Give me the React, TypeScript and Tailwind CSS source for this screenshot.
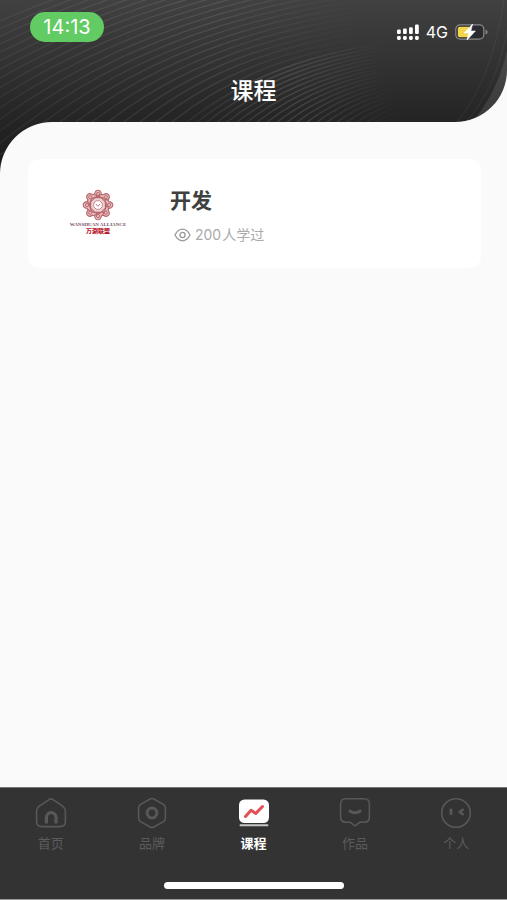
import { useState } from "react";
import type { ReactNode } from "react";

interface Course {
  id: string;
  title: string;
  views: number;
}

interface Tab {
  key: string;
  label: string;
  icon: ReactNode;
}

const courses: Course[] = [{ id: "c-1", title: "开发", views: 200 }];

const outline = {
  width: 34,
  height: 34,
  viewBox: "0 0 34 34",
  fill: "none",
  stroke: "#585858",
  strokeWidth: 1.6,
  strokeLinecap: "round" as const,
  strokeLinejoin: "round" as const,
};

const tabs: Tab[] = [
  {
    key: "home",
    label: "首页",
    icon: (
      <svg {...outline}>
        <path d="M14.6 3.8Q17 2 19.4 3.8L28.6 10.2Q31.4 12.3 31.4 15.5V25.5Q31.4 30.6 26 30.6H8Q2.6 30.6 2.6 25.5V15.5Q2.6 12.3 5.4 10.2Z" />
        <path d="M12.4 27.6V21.4A4.8 4.8 0 0 1 22 21.4V27.6" strokeWidth="3.2" strokeLinecap="butt" />
      </svg>
    ),
  },
  {
    key: "brand",
    label: "品牌",
    icon: (
      <svg {...outline}>
        <path d="M15.2 3Q17 2 18.8 3L28.4 8.4Q30.4 9.6 30.4 11.8V22.2Q30.4 24.4 28.4 25.6L18.8 31Q17 32 15.2 31L5.6 25.6Q3.6 24.4 3.6 22.2V11.8Q3.6 9.6 5.6 8.4Z" />
        <circle cx="17" cy="17" r="4.9" strokeWidth="3" />
      </svg>
    ),
  },
  {
    key: "course",
    label: "课程",
    icon: (
      <svg {...outline}>
        <rect x="2" y="3.5" width="30" height="23.5" rx="5.5" fill="#fff" stroke="none" />
        <path d="M3.5 29.2H30.5" stroke="#c9c9c9" strokeWidth="2" />
        <path d="M8.5 20.5L14 14.2L18.8 17.4L25.5 10.5" stroke="#e25156" strokeWidth="3" />
      </svg>
    ),
  },
  {
    key: "works",
    label: "作品",
    icon: (
      <svg {...outline}>
        <path d="M8 2.8H26Q31.4 2.8 31.4 8V21Q31.4 26.2 26 26.2H22L18.2 29.2Q17 30.2 15.8 29.2L12 26.2H8Q2.6 26.2 2.6 21V8Q2.6 2.8 8 2.8Z" />
        <path d="M11.8 15Q17 18.6 22.2 15" strokeWidth="2.8" />
      </svg>
    ),
  },
  {
    key: "mine",
    label: "个人",
    icon: (
      <svg {...outline}>
        <circle cx="17" cy="17" r="14.3" />
        <path d="M12 14V17.8" strokeWidth="2.8" />
        <path d="M23.8 13.8L20.6 16L23.8 18.2" strokeWidth="2.4" />
      </svg>
    ),
  },
];

function arc(sx: number, ex: number, ey: number) {
  const cx = sx + (ex - sx) * 0.4;
  const cy = ey + (122 - ey) * 0.22;
  // run on below the header so the lines reach the inverted corner
  const tailX = sx - (cx - sx);
  const tailY = 122 + (122 - cy);
  return `M${tailX} ${tailY}L${sx} 122Q${cx} ${cy} ${ex} ${ey}`;
}

// Curved line texture on the dark header
function Waves({ id }: { id: string }) {
  const sweep = Array.from({ length: 23 }, (_, i) => i);
  const fan = Array.from({ length: 20 }, (_, i) => i);
  return (
    <>
      <defs>
        <linearGradient id={id} gradientUnits="userSpaceOnUse" x1="0" y1="0" x2="0" y2="174">
          <stop offset="0" stopColor="#414141" />
          <stop offset="0.65" stopColor="#262626" />
          <stop offset="1" stopColor="#1a1a1a" />
        </linearGradient>
        <linearGradient id={`${id}-line`} gradientUnits="userSpaceOnUse" x1="0" y1="0" x2="360" y2="0">
          <stop offset="0" stopColor="#fff" stopOpacity="0.05" />
          <stop offset="0.6" stopColor="#fff" stopOpacity="0.09" />
          <stop offset="1" stopColor="#fff" stopOpacity="0" />
        </linearGradient>
        {/* slanted so that the lower lines fade further right */}
        <linearGradient id={`${id}-fan`} gradientUnits="userSpaceOnUse" x1="180" y1="100" x2="378" y2="40">
          <stop offset="0" stopColor="#fff" stopOpacity="0.05" />
          <stop offset="0.55" stopColor="#fff" stopOpacity="0.12" />
          <stop offset="1" stopColor="#fff" stopOpacity="0" />
        </linearGradient>
      </defs>
      <rect width="1600" height="174" fill={`url(#${id})`} />
      <g fill="none" stroke={`url(#${id}-line)`} strokeWidth="1.4">
        {sweep.map((i) => (
          <path key={i} d={arc(-180 + i * 16, 360, -75 + i * 5.4)} />
        ))}
      </g>
      <g fill="none" stroke={`url(#${id}-fan)`} strokeWidth="1.5">
        {fan.map((i) => (
          <path key={i} d={arc(187 + i * 10, 380 + i * 3, 44 + i * 3)} />
        ))}
      </g>
      <path d="M470 124Q498 94 508 46V124Z" fill="#fff" fillOpacity="0.1" />
      <g fill="none" stroke="#fff" strokeOpacity="0.04" strokeWidth="1.5">
        <path d="M456 124Q492 80 504 0" />
        <path d="M464 124Q498 88 509 20" />
      </g>
    </>
  );
}

function StatusBar() {
  return (
    <div className="flex items-center justify-between pl-[30px] pr-[19px] pt-3">
      <span className="flex h-[30px] w-[74px] items-center justify-center rounded-full bg-[#62cb63] text-xl leading-none text-white">
        14:13
      </span>
      <div className="flex items-center gap-[7px] pt-[10px] text-white">
        <svg width="22" height="17" viewBox="0 0 22 17" fill="#fff" aria-hidden="true">
          {[0, 1, 2, 3].map((i) => (
            <g key={i}>
              <rect x={i * 6} y={[5.4, 4.4, 3.2, 0.5][i]} width="3.8" height={[4.6, 5.6, 6.8, 9.5][i]} rx="1.3" />
              <rect x={i * 6} y="12" width="3.8" height="4" rx="1.4" />
            </g>
          ))}
        </svg>
        <span className="text-base leading-none">4G</span>
        <svg width="33" height="18" viewBox="0 0 33 18" aria-hidden="true">
          <rect x="0.8" y="1.8" width="28" height="14.4" rx="4.4" fill="#292b30" stroke="#8b8b8b" strokeWidth="1.2" />
          <path d="M4.6 3.8H14V14.2H4.6Q2.8 14.2 2.8 12.4V5.6Q2.8 3.8 4.6 3.8Z" fill="#f3d44a" />
          <path d="M30.6 6.4Q32.6 7.4 32.6 9Q32.6 10.6 30.6 11.6Z" fill="#8b8b8b" />
          <path d="M17.6 1L9 10H13.6L12 17L20.4 8H15.8Z" fill="#fff" stroke="#fff" strokeWidth="0.6" strokeLinejoin="round" />
        </svg>
      </div>
    </div>
  );
}

function CourseLogo() {
  const petals = [0, 45, 90, 135, 180, 225, 270, 315];
  return (
    <div className="mb-1 flex w-[84px] flex-col items-center">
      <svg width="32" height="32" viewBox="0 0 32 32" fill="none" stroke="#b9666c" aria-hidden="true">
        {petals.map((deg) => (
          <g key={deg} transform={`rotate(${deg} 16 16)`}>
            <path d="M10 10Q10.2 6 12.6 5Q13.2 1.2 16 1.2T19.4 5Q21.8 6 22 10Z" fill="#e3bcbe" strokeWidth="1.1" />
            <circle cx="16" cy="5" r="1.6" strokeWidth="0.9" />
          </g>
        ))}
        <rect x="8.6" y="8.6" width="14.8" height="14.8" rx="4" fill="#ecd2d3" strokeWidth="1.2" />
        <rect x="8.6" y="8.6" width="14.8" height="14.8" rx="4" strokeWidth="1" transform="rotate(45 16 16)" />
        <circle cx="16" cy="16" r="4.4" fill="#fff" strokeWidth="0.7" />
        <path d="M13.8 14.8L16 17.4L18.2 14.8" strokeWidth="0.9" />
      </svg>
      <span className="mt-px whitespace-nowrap font-['Liberation_Serif',serif] text-[5px] font-bold leading-[6px] text-[#765064]">
        WANSHUAN ALLIANCE
      </span>
      <span className="text-[6px] font-black leading-[6px] text-[#b8202c]">万涮联盟</span>
    </div>
  );
}

function CourseCard({ course }: { course: Course }) {
  return (
    <a href={`#${course.id}`} className="flex h-[109px] items-center rounded-xl bg-white pl-7">
      <CourseLogo />
      <div className="ml-[30px] pt-2">
        <h2 className="pt-px text-[21px] font-bold leading-8 text-[#404040]">{course.title}</h2>
        <p className="mt-[2px] flex items-center gap-1 pl-1 text-sm leading-8 text-[#aaa]">
          <svg width="17" height="14" viewBox="0 0 17 14" fill="none" stroke="#999" strokeWidth="1.3" aria-hidden="true">
            <path d="M1 7Q4 1.2 8.5 1.2T16 7Q13 12.8 8.5 12.8T1 7Z" />
            <circle cx="8.5" cy="7" r="2.6" />
          </svg>
          <span className="flex gap-px">
            <span>{course.views}</span>
            <span>人学过</span>
          </span>
        </p>
      </div>
    </a>
  );
}

export default function App() {
  const [active, setActive] = useState("course");

  return (
    <div className="flex min-h-screen flex-col bg-[#fafafa] font-[Inter,'Noto_Sans_CJK_SC',sans-serif]">
      <header className="relative h-[122px]">
        <div className="absolute inset-0 overflow-hidden rounded-br-[52px]">
          <svg className="h-full w-full" viewBox="0 0 507 122" preserveAspectRatio="xMinYMin slice" aria-hidden="true">
            <Waves id="header-bg" />
          </svg>
        </div>
        {/* inverted corner under the header */}
        <svg className="absolute left-0 top-full" width="52" height="52" viewBox="0 122 52 52" aria-hidden="true">
          <clipPath id="corner">
            <path d="M0 122H52A52 52 0 0 0 0 174Z" />
          </clipPath>
          <g clipPath="url(#corner)">
            <Waves id="corner-bg" />
          </g>
        </svg>
        <div className="relative">
          <StatusBar />
          <h1 className="mt-8 text-center text-[23px] font-medium leading-[34px] text-white">课程</h1>
        </div>
      </header>

      <main className="flex-1 pb-6 pl-7 pr-[26px] pt-[37px]">
        {courses.map((course) => (
          <CourseCard key={course.id} course={course} />
        ))}
      </main>

      <nav className="border-b border-t border-b-[#999] border-t-[#777] bg-[#333]">
        <div className="flex pt-2">
          {tabs.map((tab) => (
            <button
              key={tab.key}
              type="button"
              onClick={() => setActive(tab.key)}
              className={`flex flex-1 flex-col items-center text-[13px] leading-5 ${
                tab.key === active ? "font-bold text-white" : "text-[#5c5c5c]"
              }`}
            >
              <span className="mb-[3px] flex h-[34px] items-center">{tab.icon}</span>
              {tab.label}
            </button>
          ))}
        </div>
        <div className="mx-auto mb-[10px] mt-[29px] h-[7px] w-[180px] rounded-full bg-white" />
      </nav>
    </div>
  );
}
